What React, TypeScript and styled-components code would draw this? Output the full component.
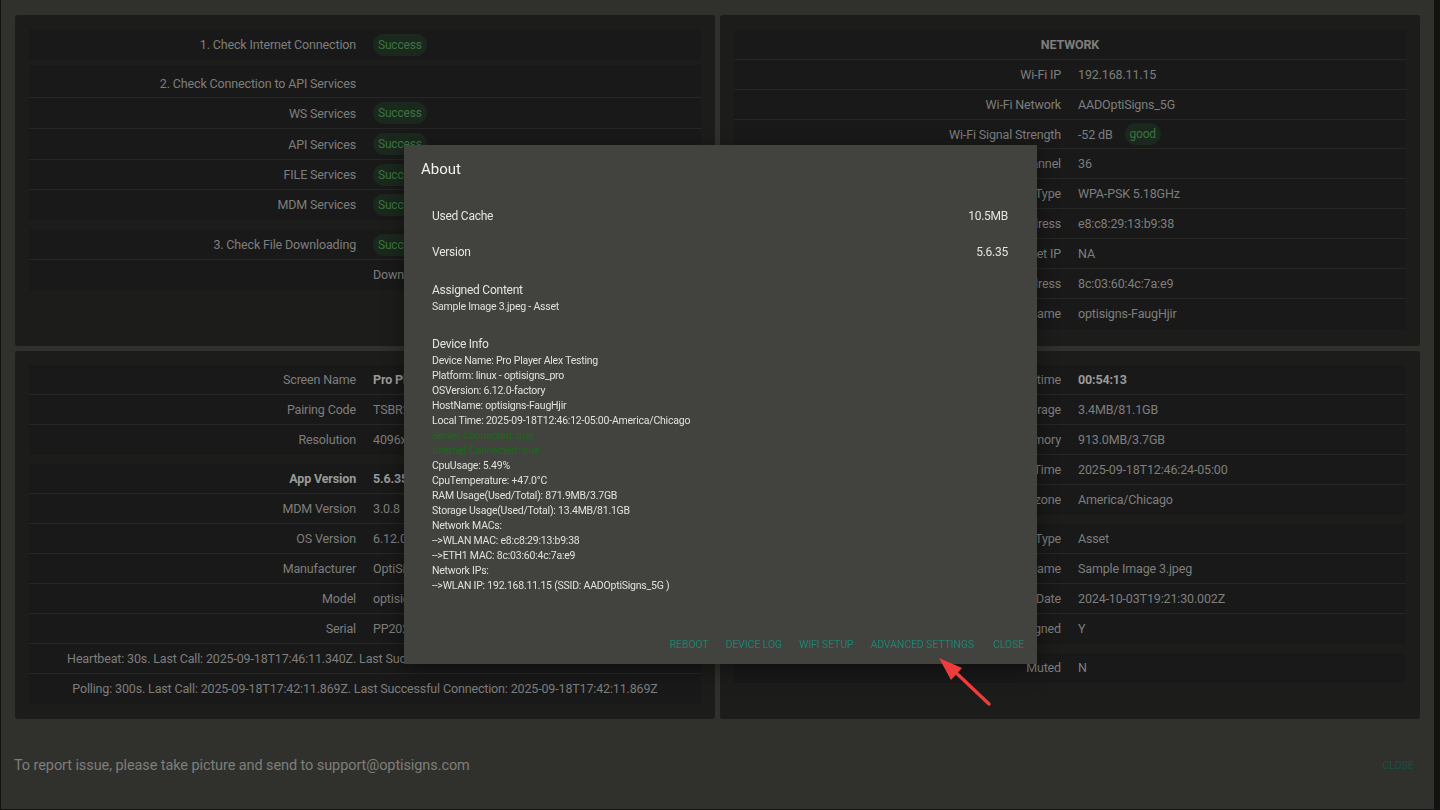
import React from "react";
import styled, { createGlobalStyle } from "styled-components";

type RowData = {
  label?: string;
  value?: string;
  chip?: string;
  bold?: boolean;
  boldValue?: boolean;
  title?: boolean;
  wide?: boolean;
  h?: number;
  drop?: number;
};

type GroupData = { gap?: number; rows: RowData[] };

const checks: GroupData[] = [
  { rows: [{ label: "1. Check Internet Connection", chip: "Success" }] },
  {
    gap: 5,
    rows: [
      { label: "2. Check Connection to API Services", h: 33, drop: 4 },
      { label: "WS Services", chip: "Success", h: 31 },
      { label: "API Services", chip: "Success", h: 31 },
      { label: "FILE Services", chip: "Success", h: 30 },
      { label: "MDM Services", chip: "Success", h: 30 },
    ],
  },
  {
    gap: 10,
    rows: [
      { label: "3. Check File Downloading", chip: "Success" },
      { label: "", value: "Download speed: 24.6MB/s" },
    ],
  },
];

const network: GroupData[] = [
  {
    rows: [
      { title: true, wide: true, value: "NETWORK" },
      { label: "Wi-Fi IP", value: "192.168.11.15" },
      { label: "Wi-Fi Network", value: "AADOptiSigns_5G" },
      { label: "Wi-Fi Signal Strength", value: "-52 dB", chip: "good", h: 29 },
      { label: "Wi-Fi Channel", value: "36" },
      { label: "Wi-Fi Type", value: "WPA-PSK 5.18GHz" },
      { label: "Wi-Fi Address", value: "e8:c8:29:13:b9:38" },
      { label: "Ethernet IP", value: "NA" },
      { label: "Ethernet Address", value: "8c:03:60:4c:7a:e9" },
      { label: "Host Name", value: "optisigns-FaugHjir" },
    ],
  },
];

const device: GroupData[] = [
  {
    rows: [
      { label: "Screen Name", value: "Pro Player Alex Testing", boldValue: true },
      { label: "Pairing Code", value: "TSBR2K" },
      { label: "Resolution", value: "4096x2160" },
    ],
  },
  {
    gap: 9,
    rows: [
      { label: "App Version", value: "5.6.35", bold: true, boldValue: true },
      { label: "MDM Version", value: "3.0.8" },
      { label: "OS Version", value: "6.12.0-factory" },
      { label: "Manufacturer", value: "OptiSigns" },
      { label: "Model", value: "optisigns_pro" },
      { label: "Serial", value: "PP2024080012" },
      {
        wide: true,
        value:
          "Heartbeat: 30s. Last Call: 2025-09-18T17:46:11.340Z. Last Successful Connection: 2025-09-18T17:46:11.340Z",
      },
      {
        wide: true,
        value:
          "Polling: 300s. Last Call: 2025-09-18T17:42:11.869Z. Last Successful Connection: 2025-09-18T17:42:11.869Z",
      },
    ],
  },
];

const status: GroupData[] = [
  {
    rows: [
      { label: "Up time", value: "00:54:13", boldValue: true },
      { label: "Storage", value: "3.4MB/81.1GB" },
      { label: "Memory", value: "913.0MB/3.7GB" },
      { label: "Device Time", value: "2025-09-18T12:46:24-05:00" },
      { label: "Timezone", value: "America/Chicago" },
    ],
  },
  {
    gap: 9,
    rows: [
      { label: "Content Type", value: "Asset" },
      { label: "Content Name", value: "Sample Image 3.jpeg" },
      { label: "Updated Date", value: "2024-10-03T19:21:30.002Z" },
      { label: "Assigned", value: "Y" },
    ],
  },
  { gap: 9, rows: [{ label: "Muted", value: "N" }] },
];

const deviceInfo = [
  "Device Name: Pro Player Alex Testing",
  "Platform: linux - optisigns_pro",
  "OSVersion: 6.12.0-factory",
  "HostName: optisigns-FaugHjir",
  "Local Time: 2025-09-18T12:46:12-05:00-America/Chicago",
  "Server Connected: true",
  "Internet Connected: true",
  "CpuUsage: 5.49%",
  "CpuTemperature: +47.0°C",
  "RAM Usage(Used/Total): 871.9MB/3.7GB",
  "Storage Usage(Used/Total): 13.4MB/81.1GB",
  "Network MACs:",
  "-->WLAN MAC: e8:c8:29:13:b9:38",
  "-->ETH1 MAC: 8c:03:60:4c:7a:e9",
  "Network IPs:",
  "-->WLAN IP: 192.168.11.15 (SSID: AADOptiSigns_5G )",
];

const actions = ["Reboot", "Device Log", "WiFi Setup", "Advanced Settings", "Close"];

const Panel = ({ groups, height, top }: { groups: GroupData[]; height: number; top: number }) => (
  <Card $height={height} $top={top}>
    {groups.map((group, i) => (
      <Group key={i} $gap={group.gap}>
        {group.rows.map((row, j) =>
          row.wide ? (
            <WideRow key={j} $title={row.title}>
              {row.value}
            </WideRow>
          ) : (
            <Row key={j} $height={row.h} $drop={row.drop}>
              <Label $bold={row.bold}>{row.label}</Label>
              <Value $bold={row.boldValue}>
                {row.value}
                {row.chip && <Chip $inset={!!row.value}>{row.chip}</Chip>}
              </Value>
            </Row>
          ),
        )}
      </Group>
    ))}
  </Card>
);

const App = () => (
  <>
    <GlobalStyle />
    <Page>
      <Grid>
        <Panel groups={checks} height={331} top={15} />
        <Panel groups={network} height={331} top={15} />
        <Panel groups={device} height={368} top={14} />
        <Panel groups={status} height={368} top={14} />
      </Grid>
      <Footer>
        <FooterText>To report issue, please take picture and send to support@optisigns.com</FooterText>
        <FooterClose>Close</FooterClose>
      </Footer>
    </Page>
    <Dialog>
      <DialogTitle>About</DialogTitle>
      <SummaryRow>
        <span>Used Cache</span>
        <span>10.5MB</span>
      </SummaryRow>
      <SummaryRow>
        <span>Version</span>
        <span>5.6.35</span>
      </SummaryRow>
      <Heading>Assigned Content</Heading>
      <InfoLine>Sample Image 3.jpeg - Asset</InfoLine>
      <Heading $info>Device Info</Heading>
      {deviceInfo.map((line) => (
        <InfoLine key={line} $connected={line.includes("Connected")}>
          {line}
        </InfoLine>
      ))}
      <Actions>
        {actions.map((a) => (
          <Action key={a}>{a}</Action>
        ))}
      </Actions>
    </Dialog>
    <Arrow width="70" height="60" viewBox="930 650 70 60">
      <path d="M989 704 L951 668" stroke="#ee3b3b" strokeWidth="3.4" strokeLinecap="round" />
      <path d="M939 658 L962 668 L951 680 Z" fill="#ee3b3b" />
    </Arrow>
  </>
);

const GlobalStyle = createGlobalStyle`
  html, body {
    margin: 0;
    height: 100%;
    background: #121211;
    overflow: hidden;
  }
  body {
    font-family: Roboto, "Liberation Sans", sans-serif;
  }
`;

const Page = styled.div`
  width: 1433px;
  height: 809px;
  margin-left: 1px;
  box-sizing: border-box;
  padding: 15px 20px 0 14px;
  display: flex;
  flex-direction: column;
  background: #30312c;
`;

const Grid = styled.div`
  display: grid;
  grid-template-columns: 700px 700px;
  column-gap: 5px;
  row-gap: 5px;
`;

const Card = styled.section<{ $height: number; $top: number }>`
  height: ${(p) => p.$height}px;
  box-sizing: border-box;
  padding: ${(p) => p.$top}px 14px 0;
  background: #1c1c1a;
  border-radius: 3px;
`;

const Group = styled.div<{ $gap?: number }>`
  margin-top: ${(p) => p.$gap || 0}px;
  background: #191919;
`;

const Row = styled.div<{ $height?: number; $drop?: number }>`
  display: grid;
  grid-template-columns: 327px 1fr;
  column-gap: 17px;
  align-items: center;
  height: ${(p) => p.$height || 30}px;
  padding-top: ${(p) => p.$drop || 0}px;
  box-sizing: border-box;
  border-bottom: 1px solid #262625;
  font-size: 12.5px;
  letter-spacing: -0.15px;
  white-space: nowrap;
  &:last-child {
    border-bottom-color: transparent;
  }
`;

const Label = styled.div<{ $bold?: boolean }>`
  text-align: right;
  color: ${(p) => (p.$bold ? "#9a9a98" : "#7e7e7c")};
  font-weight: ${(p) => (p.$bold ? 700 : 400)};
`;

const Value = styled.div<{ $bold?: boolean }>`
  color: ${(p) => (p.$bold ? "#9a9a98" : "#7e7e7c")};
  font-weight: ${(p) => (p.$bold ? 700 : 400)};
  display: flex;
  align-items: center;
`;

const WideRow = styled.div<{ $title?: boolean }>`
  height: 30px;
  line-height: 29px;
  box-sizing: border-box;
  text-align: center;
  border-bottom: 1px solid #262625;
  font-size: 12.5px;
  letter-spacing: -0.15px;
  font-weight: ${(p) => (p.$title ? 700 : 400)};
  color: #7e7e7c;
  white-space: nowrap;
  &:last-child {
    border-bottom-color: transparent;
  }
`;

const Chip = styled.span<{ $inset: boolean }>`
  margin-left: ${(p) => (p.$inset ? "12px" : "0")};
  padding: 0 5px;
  height: 22px;
  line-height: 22px;
  border-radius: 11px;
  background: #1b281d;
  color: #3a7440;
  font-size: 12px;
  letter-spacing: -0.2px;
`;

const Footer = styled.footer`
  flex: 1;
  display: flex;
  align-items: center;
  justify-content: space-between;
  padding: 2px 0 0;
`;

const FooterText = styled.div`
  margin-left: -1px;
  font-size: 14.5px;
  letter-spacing: -0.09px;
  color: #7e7e7c;
`;

const FooterClose = styled.div`
  font-size: 10.5px;
  text-transform: uppercase;
  color: #0f5246;
`;

const Dialog = styled.div`
  position: fixed;
  left: 404px;
  top: 145px;
  width: 633px;
  height: 519px;
  box-sizing: border-box;
  padding: 14px 29px 10px 28px;
  display: flex;
  flex-direction: column;
  background: #42423f;
  color: #e4e4e2;
  box-shadow: 0 6px 20px rgba(0, 0, 0, 0.4);
`;

const DialogTitle = styled.div`
  margin-left: -11px;
  margin-bottom: 28px;
  font-size: 15px;
  line-height: 20px;
  color: #f0f0ee;
`;

const SummaryRow = styled.div`
  display: flex;
  justify-content: space-between;
  height: 18px;
  line-height: 18px;
  margin-bottom: 18px;
  font-size: 12px;
  letter-spacing: -0.25px;
`;

const Heading = styled.div<{ $info?: boolean }>`
  margin-top: ${(p) => (p.$info ? "21px" : "2px")};
  font-size: 12px;
  letter-spacing: -0.25px;
  line-height: 18px;
`;

const InfoLine = styled.div<{ $connected?: boolean }>`
  font-size: 10.5px;
  letter-spacing: -0.22px;
  line-height: 15px;
  color: ${(p) => (p.$connected ? "#1c6b1c" : "#e0e0de")};
`;

const Actions = styled.div`
  margin-top: auto;
  margin-right: -16px;
  display: flex;
  justify-content: flex-end;
  gap: 17px;
`;

const Action = styled.button`
  padding: 0;
  border: none;
  background: none;
  font-family: inherit;
  font-size: 10.5px;
  letter-spacing: -0.1px;
  line-height: 18px;
  text-transform: uppercase;
  color: #1f8370;
  &:last-child {
    margin-left: 2px;
  }
`;

const Arrow = styled.svg`
  position: fixed;
  left: 930px;
  top: 650px;
`;

export default App;
